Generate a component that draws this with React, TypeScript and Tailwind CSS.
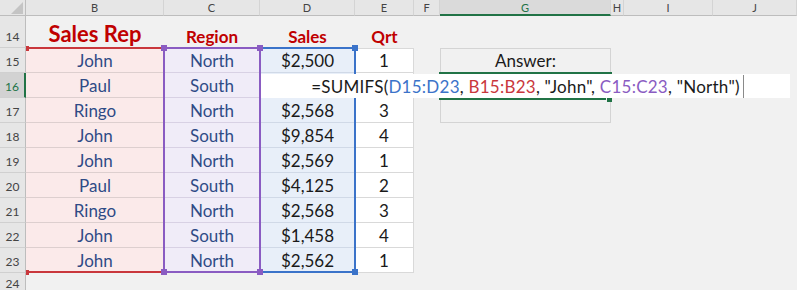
import React from 'react';

type Row = { n: number; rep: string; region: string; sales: string; qrt: string };

const rows: Row[] = [
  { n: 15, rep: 'John', region: 'North', sales: '$2,500', qrt: '1' },
  { n: 16, rep: 'Paul', region: 'South', sales: '', qrt: '' },
  { n: 17, rep: 'Ringo', region: 'North', sales: '$2,568', qrt: '3' },
  { n: 18, rep: 'John', region: 'South', sales: '$9,854', qrt: '4' },
  { n: 19, rep: 'John', region: 'North', sales: '$2,569', qrt: '1' },
  { n: 20, rep: 'Paul', region: 'South', sales: '$4,125', qrt: '2' },
  { n: 21, rep: 'Ringo', region: 'North', sales: '$2,568', qrt: '3' },
  { n: 22, rep: 'John', region: 'South', sales: '$1,458', qrt: '4' },
  { n: 23, rep: 'John', region: 'North', sales: '$2,562', qrt: '1' },
];

const letters = ['B', 'C', 'D', 'E', 'F', 'G', 'H', 'I', 'J'];

const cell = 'flex items-end justify-center pb-[3px] text-[17px] leading-none';

const RED = '#c9373c';
const PURPLE = '#8a5cc2';
const BLUE = '#3b73c9';
const GREEN = '#217346';

const RowHead: React.FC<{ n: number; active?: boolean }> = ({ n, active }) => (
  <div
    className={`flex items-end justify-center pb-[4px] text-[12px] leading-none border-b border-b-[#d0d0d0] ${
      active
        ? 'bg-[#d2d2d2] text-[#217346] border-r-2 border-r-[#217346]'
        : 'bg-[#e6e6e6] text-[#444] border-r border-r-[#bdbdbd]'
    }`}
  >
    {n}
  </div>
);

// coloured range outlines + active cell frame, drawn over the grid
const Overlay: React.FC = () => (
  <svg className="absolute inset-0 pointer-events-none" width="797" height="290" shapeRendering="crispEdges">
    <rect x="260" y="48" width="95" height="224" fill="none" stroke={BLUE} strokeWidth="2" />
    <rect x="164" y="48" width="96" height="224" fill="none" stroke={PURPLE} strokeWidth="2" />
    <rect x="26" y="47" width="137" height="2" fill={RED} />
    <rect x="26" y="271" width="137" height="2" fill={RED} />
    <rect x="26" y="46" width="3" height="5" fill={RED} />
    <rect x="26" y="270" width="3" height="5" fill={RED} />
    <rect x="352" y="45" width="6" height="6" fill={BLUE} />
    <rect x="352" y="269" width="6" height="6" fill={BLUE} />
    <rect x="161" y="45" width="6" height="6" fill={PURPLE} />
    <rect x="161" y="269" width="6" height="6" fill={PURPLE} />
    <rect x="257" y="45" width="6" height="6" fill={PURPLE} />
    <rect x="257" y="269" width="6" height="6" fill={PURPLE} />
    <rect x="439" y="72" width="173" height="2" fill={GREEN} />
    <rect x="439" y="98" width="167" height="2" fill={GREEN} />
    <rect x="607" y="97" width="5" height="5" fill={GREEN} />
  </svg>
);

const App: React.FC = () => {
  return (
    <div className="relative w-[797px] h-[290px] overflow-hidden bg-[#f1f1f1] font-[Lato,sans-serif] text-[#1a1a1a]">
      <div className="grid grid-cols-[26px_138px_96px_95px_59px_26px_171px_13px_89px_84px] grid-rows-[16px_32px_repeat(9,25px)_25px]">
        {/* column headers */}
        <div className="bg-[#e6e6e6] border-r border-b border-[#bdbdbd]">
          <svg width="25" height="15" viewBox="0 0 25 15">
            <polygon points="23,2 23,14 11,14" fill="#c4c4c4" />
          </svg>
        </div>
        {letters.map((l) => (
          <div
            key={l}
            className={`flex items-center justify-center text-[11px] leading-none border-r border-r-[#d4d4d4] ${
              l === 'G'
                ? 'bg-[#dadada] text-[#217346] border-b-2 border-b-[#217346]'
                : 'bg-[#e6e6e6] text-[#444] border-b border-b-[#bdbdbd]'
            }`}
          >
            {l}
          </div>
        ))}

        {/* row 14: titles */}
        <RowHead n={14} />
        <div className={`${cell} text-[22px] font-bold text-[#c00000]`}>Sales Rep</div>
        <div className={`${cell} text-[16px] font-bold text-[#c00000]`}>Region</div>
        <div className={`${cell} text-[16px] font-bold text-[#c00000]`}>Sales</div>
        <div className={`${cell} text-[16px] font-bold text-[#c00000]`}>Qrt</div>
        <div />
        <div />
        <div />
        <div />
        <div />

        {rows.map((r, i) => (
          <React.Fragment key={r.n}>
            <RowHead n={r.n} active={r.n === 16} />
            <div className={`${cell} bg-[#fbeaea] border-b border-[#ddcfcf] text-[#2f4b86]`}>{r.rep}</div>
            <div className={`${cell} bg-[#f0ecf8] border-b border-[#d8d1e4] text-[#2f4b86]`}>{r.region}</div>
            <div className={`${cell} bg-[#e8eff9] border-b border-[#d0d9e7]`}>{r.sales}</div>
            <div className={`${cell} bg-white border-b border-r border-[#d9d9d9] ${i === 0 ? 'border-t' : ''}`}>{r.qrt}</div>
            <div />
            {r.n === 15 && <div className={`${cell} border border-[#d4d4d4]`}>Answer:</div>}
            {r.n === 16 && <div className="border-x border-[#d4d4d4]" />}
            {r.n === 17 && <div className="border-x border-b border-[#d4d4d4]" />}
            {r.n > 17 && <div />}
            <div />
            <div />
            <div />
          </React.Fragment>
        ))}

        <div className="flex items-start justify-center pt-[5px] text-[12px] leading-none bg-[#e6e6e6] text-[#444] border-r border-r-[#bdbdbd]">
          24
        </div>
      </div>

      <Overlay />

      {/* in-cell formula editor */}
      <div className="absolute left-[261px] top-[74px] w-[529px] h-[24px] bg-white flex items-end justify-center pb-[3px] text-[17px] tracking-[0.25px] leading-none whitespace-nowrap">
        <span className="relative">
          =SUMIFS(<span className="text-[#3b73c9]">D15:D23</span>, <span className="text-[#c9373c]">B15:B23</span>, "John",{' '}
          <span className="text-[#8a5cc2]">C15:C23</span>, "North")
          <span className="absolute -right-[4px] -bottom-[3px] w-px h-[23px] bg-[#8a8a8a]" />
        </span>
      </div>
    </div>
  );
};

export default App;
